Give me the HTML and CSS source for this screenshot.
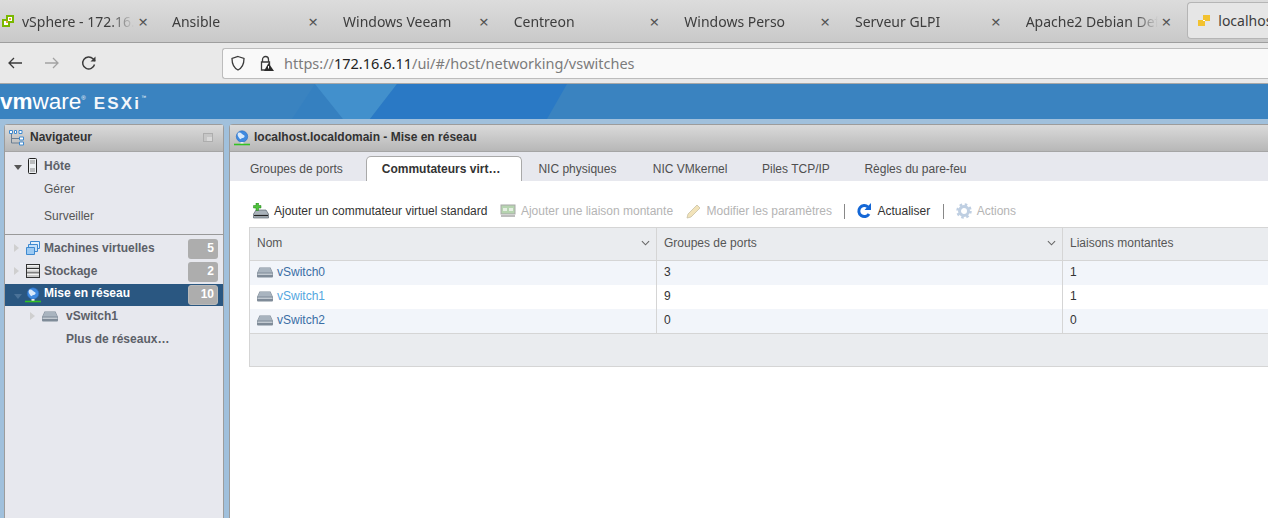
FILE: index.html
```html
<!DOCTYPE html>
<html lang="fr">
<head>
  <meta charset="UTF-8">
  <title>localhost.localdomain - VMware ESXi</title>
  <link rel="stylesheet" href="styles.css">
</head>
<body>

<div class="tabbar">
  <div class="tab first">
    <svg class="favicon" viewBox="0 0 12 12"><path d="M4 0h8v8H8v4H0V4h4z" fill="#7ab800"/><path d="M2 6h4v4H2zM6 2h4v4H6z" fill="#fff"/><path d="M4 6h2v2H4zM7 3h2v2H7z" fill="#e8a33d"/></svg>
    <span class="tab-title">vSphere - 172.16.1.1</span>
    <span class="tab-close">×</span>
  </div>
  <div class="tab"><span class="tab-title">Ansible</span><span class="tab-close">×</span></div>
  <div class="tab"><span class="tab-title">Windows Veeam</span><span class="tab-close">×</span></div>
  <div class="tab"><span class="tab-title">Centreon</span><span class="tab-close">×</span></div>
  <div class="tab"><span class="tab-title">Windows Perso</span><span class="tab-close">×</span></div>
  <div class="tab"><span class="tab-title">Serveur GLPI</span><span class="tab-close">×</span></div>
  <div class="tab"><span class="tab-title">Apache2 Debian Default</span><span class="tab-close">×</span></div>
  <div class="tab active">
    <svg class="favicon" viewBox="0 0 12 12"><path d="M5 0h7v6H7v5H0V5h5z" fill="#f2c230"/><path d="M5 5h2v1H5z" fill="#fff"/></svg>
    <span class="tab-title plain">localhost.localdomain</span>
  </div>
</div>

<div class="toolbar">
  <svg class="nav-icon" viewBox="0 0 16 16"><path d="M15 8H2M7 3 2 8l5 5" fill="none" stroke="#3a3a3a" stroke-width="1.3"/></svg>
  <svg class="nav-icon" viewBox="0 0 16 16"><path d="M1 8h13M9 3l5 5-5 5" fill="none" stroke="#a2a2a2" stroke-width="1.3"/></svg>
  <svg class="nav-icon" viewBox="0 0 16 16"><path d="M13.5 9.5A6 6 0 1 1 12 3.8L14 6" fill="none" stroke="#3a3a3a" stroke-width="1.4"/><path d="M14.5 1.5V6.500H9.500z" fill="#3a3a3a"/></svg>
  <div class="urlbar">
    <svg class="url-icon" viewBox="0 0 16 16"><path d="M8 1.500 14 3.500C14 9 12 13 8 15 4 13 2 9 2 3.500z" fill="none" stroke="#3a3a3a" stroke-width="1.3"/></svg>
    <svg class="url-icon" viewBox="0 0 16 16"><path d="M4.500 7V4.500a3 3 0 0 1 6 0V7M3.500 7h8v8h-8z" fill="none" stroke="#3a3a3a" stroke-width="1.3"/><path d="M10.500 8 16 16H6z" fill="#2b2b2b"/><path d="M10.500 11v2.500" stroke="#fff"/></svg>
    <span class="url"><span class="url-dim">https://</span>172.16.6.11<span class="url-dim">/ui/#/host/networking/vswitches</span></span>
  </div>
</div>

<div class="brand">
  <svg class="brand-art" viewBox="0 0 1268 35" preserveAspectRatio="none">
    <path d="M292 35 315 0 343 35z" fill="#3580c0"/>
    <path d="M315 0H397L370 35H343z" fill="#4290cc"/>
    <path d="M397 0H567L547 35H370z" fill="#2a79c5"/>
  </svg>
  <div class="logo"><b>vm</b>ware<sup class="reg">®</sup><span class="esxi">ESXi</span><sup class="tm">™</sup></div>
</div>

<div class="workspace">
  <aside class="navigator">
    <div class="panel-head">
      <svg class="head-icon" viewBox="0 0 16 16"><path d="M2.500 4v9h9M2.500 8.500h9" fill="none" stroke="#6b7f93"/><path d="M.5.500h3v3h-3zM5.500.500h2v3h-2zM10 .500h3v3h-3zM10.500 7h4v3h-4zM10.500 12h4v3h-4z" fill="#fff" stroke="#3f8ad0"/></svg>
      <span class="panel-title">Navigateur</span>
      <span class="pin"></span>
    </div>

    <div class="host-block">
      <div class="tree-row bold">
        <span class="caret open"></span>
        <svg class="tree-icon" viewBox="0 0 16 16"><rect x="3.500" y="0.500" width="8" height="15" rx="1" fill="#eceff2" stroke="#222"/><path d="M5 3h5M5 5h5M5 11h5M5 13h5" stroke="#888"/></svg>
        <span>Hôte</span>
      </div>
      <div class="sub-link first-link">Gérer</div>
      <div class="sub-link">Surveiller</div>
    </div>

    <div class="tree-row bold counted">
      <span class="caret"></span>
      <svg class="tree-icon" viewBox="0 0 16 16"><path d="M5.500 1.500h9v7h-9z" fill="#e3f0fc" stroke="#3f8ad0"/><path d="M3.500 4.500h9v7h-9z" fill="#c6e0f8" stroke="#3f8ad0"/><path d="M1.500 7.500h8v7h-8z" fill="#9ccaf3" stroke="#3f8ad0"/></svg>
      <span>Machines virtuelles</span>
      <span class="count">5</span>
    </div>
    <div class="tree-row bold counted">
      <span class="caret"></span>
      <svg class="tree-icon" viewBox="0 0 16 16"><rect x="1.500" y="1.500" width="13" height="13" fill="#c9c9c9" stroke="#333"/><path d="M2 5.500h12M2 10h12" stroke="#333"/><path d="M2 2h12v1.500H2zM2 6h12v1.500H2zM2 10.500h12V12H2z" fill="#f2f2f2"/></svg>
      <span>Stockage</span>
      <span class="count">2</span>
    </div>
    <div class="tree-row bold counted selected">
      <span class="caret open"></span>
      <svg class="tree-icon" viewBox="0 0 16 16"><circle cx="8" cy="6.500" r="5.700" fill="#3f8ae0" stroke="#2a6cbf" stroke-width=".6"/><path d="M4 3c3-1.500 3.500 1.500 5.500 2s1 3-1 3-1.500 2.500-3 .5S3 5 4 3z" fill="#d8e9fb"/><path d="M6.500 12h3v2h-3z" fill="#eee"/><path d="M0 14.500h16" stroke="#34c124" stroke-width="1.600"/></svg>
      <span class="raised">Mise en réseau</span>
      <span class="count">10</span>
    </div>
    <div class="tree-row bold nested">
      <span class="caret"></span>
      <svg class="switch-icon" viewBox="0 0 16 11"><path d="M2.500.5h11L16 6v3.500a1 1 0 0 1-1 1H1a1 1 0 0 1-1-1V6z" fill="#7f8b98"/><path d="M2.800 1h10.400l2 4.500H.8z" fill="#a9b4bf"/><path d="M.5 6.500h15V8H.5z" fill="#c3cad2"/></svg>
      <span>vSwitch1</span>
    </div>
    <div class="tree-row bold more">Plus de réseaux…</div>
  </aside>

  <main class="content">
    <div class="panel-head">
      <svg class="tree-icon" viewBox="0 0 16 16"><circle cx="8" cy="6.500" r="5.700" fill="#3f8ae0" stroke="#2a6cbf" stroke-width=".6"/><path d="M4 3c3-1.500 3.500 1.500 5.500 2s1 3-1 3-1.500 2.500-3 .5S3 5 4 3z" fill="#d8e9fb"/><path d="M6.500 12h3v2h-3z" fill="#eee"/><path d="M0 14.500h16" stroke="#34c124" stroke-width="1.600"/></svg>
      <span class="panel-title">localhost.localdomain - Mise en réseau</span>
    </div>

    <div class="subtabs">
      <div class="subtab">Groupes de ports</div>
      <div class="subtab current">Commutateurs virt…</div>
      <div class="subtab">NIC physiques</div>
      <div class="subtab">NIC VMkernel</div>
      <div class="subtab">Piles TCP/IP</div>
      <div class="subtab">Règles du pare-feu</div>
    </div>

    <div class="actions">
      <div class="action">
        <svg class="action-icon" viewBox="0 0 16 16"><path d="M3 7h10l2.500 4v4H.5v-4z" fill="#a9b2ba" stroke="#4a5560" stroke-width=".6"/><path d="M1 12.500h14" stroke="#222" stroke-width="1.200"/><path d="M3 0h2.500v2.500H8V5H5.500v2.500H3V5H.5V2.500H3z" fill="#4fc43c" stroke="#1f7d14" stroke-width=".5"/></svg>
        Ajouter un commutateur virtuel standard
      </div>
      <div class="action disabled">
        <svg class="action-icon" viewBox="0 0 16 16"><rect x="1" y="2" width="14" height="9" fill="#b6d4b0" stroke="#a8a8a8"/><path d="M3 5h4v3H3zM9 5h4v3H9z" fill="#e5efe3"/><path d="M1 12h14v2H1z" fill="#bdbdbd"/></svg>
        Ajouter une liaison montante
      </div>
      <div class="action disabled">
        <svg class="action-icon" viewBox="0 0 16 16"><path d="M1 15l1-4L11 2l3 3-9 9z" fill="#f2e3ba" stroke="#c9c1a5" stroke-width=".8"/></svg>
        Modifier les paramètres
      </div>
      <span class="sep"></span>
      <div class="action">
        <svg class="action-icon" viewBox="0 0 16 16"><path d="M13 11a5.500 5.500 0 1 1-1-7" fill="none" stroke="#1467d6" stroke-width="3"/><path d="M15 0v7H8.500z" fill="#1467d6"/></svg>
        Actualiser
      </div>
      <span class="sep wide"></span>
      <div class="action disabled">
        <svg class="action-icon" viewBox="0 0 16 16"><circle cx="8" cy="8" r="4.500" fill="none" stroke="#bfcfe2" stroke-width="3"/><circle cx="8" cy="8" r="6.500" fill="none" stroke="#bfcfe2" stroke-width="2.500" stroke-dasharray="2.500 2.600"/></svg>
        Actions
      </div>
    </div>

    <div class="grid">
      <div class="grid-row grid-head">
        <div class="cell">Nom<svg class="chev" viewBox="0 0 10 6"><path d="M1 1l4 4 4-4" fill="none" stroke="#666" stroke-width="1.200"/></svg></div>
        <div class="cell">Groupes de ports<svg class="chev" viewBox="0 0 10 6"><path d="M1 1l4 4 4-4" fill="none" stroke="#666" stroke-width="1.200"/></svg></div>
        <div class="cell">Liaisons montantes</div>
      </div>
      <div class="grid-row odd">
        <div class="cell"><svg class="switch-icon" viewBox="0 0 16 11"><path d="M2.500.5h11L16 6v3.500a1 1 0 0 1-1 1H1a1 1 0 0 1-1-1V6z" fill="#7f8b98"/><path d="M2.800 1h10.400l2 4.500H.8z" fill="#a9b4bf"/><path d="M.5 6.500h15V8H.5z" fill="#c3cad2"/></svg><a class="sw-link">vSwitch0</a></div>
        <div class="cell">3</div>
        <div class="cell">1</div>
      </div>
      <div class="grid-row">
        <div class="cell"><svg class="switch-icon" viewBox="0 0 16 11"><path d="M2.500.5h11L16 6v3.500a1 1 0 0 1-1 1H1a1 1 0 0 1-1-1V6z" fill="#7f8b98"/><path d="M2.800 1h10.400l2 4.500H.8z" fill="#a9b4bf"/><path d="M.5 6.500h15V8H.5z" fill="#c3cad2"/></svg><a class="sw-link hover">vSwitch1</a></div>
        <div class="cell">9</div>
        <div class="cell">1</div>
      </div>
      <div class="grid-row odd">
        <div class="cell"><svg class="switch-icon" viewBox="0 0 16 11"><path d="M2.500.5h11L16 6v3.500a1 1 0 0 1-1 1H1a1 1 0 0 1-1-1V6z" fill="#7f8b98"/><path d="M2.800 1h10.400l2 4.500H.8z" fill="#a9b4bf"/><path d="M.5 6.500h15V8H.5z" fill="#c3cad2"/></svg><a class="sw-link">vSwitch2</a></div>
        <div class="cell">0</div>
        <div class="cell">0</div>
      </div>
      <div class="grid-foot"></div>
    </div>
  </main>
</div>

</body>
</html>
```

FILE: styles.css
```css
html, body {
  margin: 0;
  padding: 0;
  height: 518px;
  overflow: hidden;
}
body {
  width: 1268px;
  font-family: "Liberation Sans", Arial, sans-serif;
  font-size: 12px;
  background: #fff;
}

/* browser chrome */
.tabbar {
  display: flex;
  height: 42px;
  background: linear-gradient(#dcdcdc, #c9c9c9);
  border-bottom: 1px solid #9e9e9e;
  font-family: "Noto Sans", sans-serif;
  font-size: 14px;
  color: #3d3d3d;
}
.tab {
  flex: 0 0 170.67px;
  min-width: 0;
  box-sizing: border-box;
  display: flex;
  align-items: center;
  height: 42px;
  padding-left: 26px;
}
.tab.first {
  flex-basis: 147px;
  padding-left: 2px;
}
.tab.first + .tab {
  flex-basis: 170px;
  padding-left: 25px;
}
.tab-title {
  flex: 1;
  min-width: 0;
  white-space: nowrap;
  overflow: hidden;
  -webkit-mask-image: linear-gradient(to left, transparent 0, #000 24px);
  mask-image: linear-gradient(to left, transparent 0, #000 24px);
}
.tab-title.plain {
  -webkit-mask-image: none;
  mask-image: none;
}
.tab-close {
  flex: 0 0 8px;
  margin: 0 -1px 0 4px;
  font-size: 17px;
  color: #555;
  display: flex;
  justify-content: center;
}
.favicon {
  width: 12px;
  height: 12px;
  margin-right: 8px;
  flex: none;
}
.tab.active {
  flex: 1 0 0;
  height: 37px;
  margin: 2px 0 0 17px;
  padding-left: 10px;
  background: #e6e6e6;
  border: 1px solid #b5b5b5;
  border-right: none;
  border-radius: 4px 0 0 4px;
}
.toolbar {
  display: flex;
  align-items: center;
  height: 40px;
  padding-left: 7px;
  background: #e9e9e9;
  border-bottom: 1px solid #a8a8a8;
}
.nav-icon {
  width: 16px;
  height: 16px;
  margin-right: 21px;
  flex: none;
}
.nav-icon:nth-child(3) {
  margin-right: 0;
}
.urlbar {
  flex: 1;
  display: flex;
  align-items: center;
  height: 29px;
  margin-left: 125px;
  padding-left: 7px;
  background: #f9f9f9;
  border: 1px solid #bcbcbc;
  border-right: none;
  border-radius: 3px 0 0 3px;
}
.url-icon {
  width: 16px;
  height: 16px;
  margin-right: 12px;
}
.url-icon + .url-icon {
  margin-right: 10px;
}
.url {
  font-family: "Noto Sans", sans-serif;
  font-size: 14.5px;
  color: #222;
}
.url-dim {
  color: #7c7c7c;
}

/* esxi header */
.brand {
  position: relative;
  height: 35px;
  background: #3a83c0;
  overflow: hidden;
}
.brand-art {
  position: absolute;
  left: 0;
  top: 0;
  width: 1268px;
  height: 35px;
}
.logo {
  position: relative;
  height: 35px;
  line-height: 35px;
  color: #fff;
  font-size: 22.5px;
  white-space: nowrap;
}
.reg {
  font-size: 6px;
  vertical-align: 9px;
  line-height: 0;
}
.esxi {
  margin-left: 8px;
  font-size: 17px;
  font-weight: bold;
  letter-spacing: 2.2px;
  color: #f2f6fa;
}
.tm {
  font-size: 5px;
  vertical-align: 10px;
  line-height: 0;
}

/* panels */
.workspace {
  display: flex;
  gap: 5px;
  height: 394px;
  padding: 5px 0 0 4px;
  background: #a0c0dc;
}
.navigator {
  flex: 0 0 218px;
  background: #e7e8ee;
  border: 1px solid #9c9c9c;
  border-bottom: none;
  border-radius: 4px 4px 0 0;
  color: #555;
}
.content {
  flex: 1;
  min-width: 0;
  background: #fff;
  border: 1px solid #9c9c9c;
  border-right: none;
  border-bottom: none;
  border-radius: 4px 0 0 0;
}
.panel-head {
  display: flex;
  align-items: center;
  box-sizing: border-box;
  height: 27px;
  padding: 0 0 1px 4px;
  background: linear-gradient(#dadada, #b7b7b7);
  border-bottom: 1px solid #a5a5a5;
}
.panel-title {
  margin-bottom: 1px;
  font-weight: bold;
  color: #333;
}
.head-icon {
  width: 16px;
  height: 16px;
  margin: 0 5px 0 0;
}
.pin {
  width: 8px;
  height: 7px;
  margin-left: auto;
  margin-right: 10px;
  background: #d9d9d9;
  border: 1px solid #adadad;
  box-shadow: inset 3px 3px 0 #c6c6c6;
}

/* tree */
.host-block {
  height: 80px;
  padding-top: 2px;
  border-bottom: 1px solid #999;
}
.tree-row {
  display: flex;
  align-items: center;
  height: 23px;
  padding-left: 9px;
  white-space: nowrap;
}
.bold {
  font-weight: bold;
  color: #5c6068;
}
.caret {
  flex: none;
  width: 0;
  height: 0;
  margin-right: 6px;
  border-style: solid;
  border-width: 4px 0 4px 5px;
  border-color: transparent transparent transparent #cfcfcf;
}
.caret.open {
  margin-top: 3px;
  margin-right: 3px;
  border-width: 5px 4px 0 4px;
  border-color: #555 transparent transparent transparent;
}
.tree-icon {
  flex: none;
  width: 16px;
  height: 16px;
  margin-right: 3px;
}
.content .tree-icon {
  margin-right: 4px;
}
.sub-link {
  height: 29px;
  line-height: 29px;
  padding-left: 39px;
}
.first-link {
  height: 25px;
  line-height: 25px;
}
.count {
  width: 30px;
  height: 20px;
  line-height: 18px;
  margin: 3px 5px 0 auto;
  padding-right: 4px;
  box-sizing: border-box;
  text-align: right;
  color: #fff;
  background: #adadad;
  border-radius: 3px;
}
.host-block + .counted {
  margin-top: 1px;
}
.selected {
  height: 22px;
  margin-top: 2px;
  background: #2a5781;
  color: #fff;
}
.selected .count {
  margin-top: 0;
  border: 1px solid #b9b9b9;
  line-height: 16px;
  padding-right: 3px;
}
.selected .caret.open {
  border-top-color: #4a7298;
}
.raised {
  display: inline-block;
  margin-bottom: 4px;
}
.nested {
  height: 20px;
  padding-left: 25px;
}
.nested .caret {
  margin-right: 7px;
}
.nested .switch-icon {
  margin-right: 8px;
}
.more {
  height: 26px;
  padding-left: 61px;
}
.switch-icon {
  flex: none;
  width: 16px;
  height: 11px;
  margin-right: 4px;
}

/* right pane */
.subtabs {
  display: flex;
  height: 29px;
  padding-left: 4px;
  background: #e7e8ee;
}
.subtab {
  padding: 0 17.3px;
  line-height: 35px;
  color: #4f4f4f;
  white-space: nowrap;
}
.subtab:first-child {
  padding: 0 23px 0 16px;
}
.subtab.current {
  height: 24px;
  margin-top: 4px;
  padding: 0 21px 0 15px;
  line-height: 25px;
  font-weight: bold;
  color: #333;
  background: #fff;
  border: 1px solid #a9a9a9;
  border-bottom: none;
  border-radius: 5px 5px 0 0;
}
.current + .subtab {
  padding: 0 19px 0 16px;
}
.actions {
  display: flex;
  align-items: center;
  box-sizing: border-box;
  height: 46px;
  padding: 14px 0 0 23px;
}
.action {
  display: flex;
  align-items: center;
  margin-right: 12.5px;
  color: #333;
  white-space: nowrap;
}
.action.disabled {
  color: #b4b4b4;
}
.action-icon {
  flex: none;
  width: 16px;
  height: 16px;
  margin-right: 5px;
}
.sep {
  width: 1px;
  height: 15px;
  margin-right: 11px;
  background: #888;
}
.sep.wide {
  margin-right: 12px;
}

/* table */
.grid {
  margin-left: 19px;
  border-top: 1px solid #d5d5d5;
  border-left: 1px solid #d5d5d5;
  border-bottom: 1px solid #d5d5d5;
}
.grid-row {
  display: grid;
  grid-template-columns: 407px 406px 1fr;
  height: 24px;
  color: #333;
}
.grid-head {
  height: 32px;
  background: #eaecef;
  border-bottom: 1px solid #d5d5d5;
  color: #565656;
}
.odd {
  background: #f2f5fa;
}
.cell {
  display: flex;
  align-items: center;
  padding: 0 7px 2px;
  border-right: 1px solid #d5d5d5;
}
.cell:last-child {
  border-right: none;
}
.chev {
  width: 9px;
  height: 6px;
  margin: 0 -1px 0 auto;
}
.sw-link {
  color: #3a6ea5;
}
.sw-link.hover {
  color: #54a6e0;
}
.grid-foot {
  height: 32px;
  background: #eaecef;
  border-top: 1px solid #d5d5d5;
}
```
